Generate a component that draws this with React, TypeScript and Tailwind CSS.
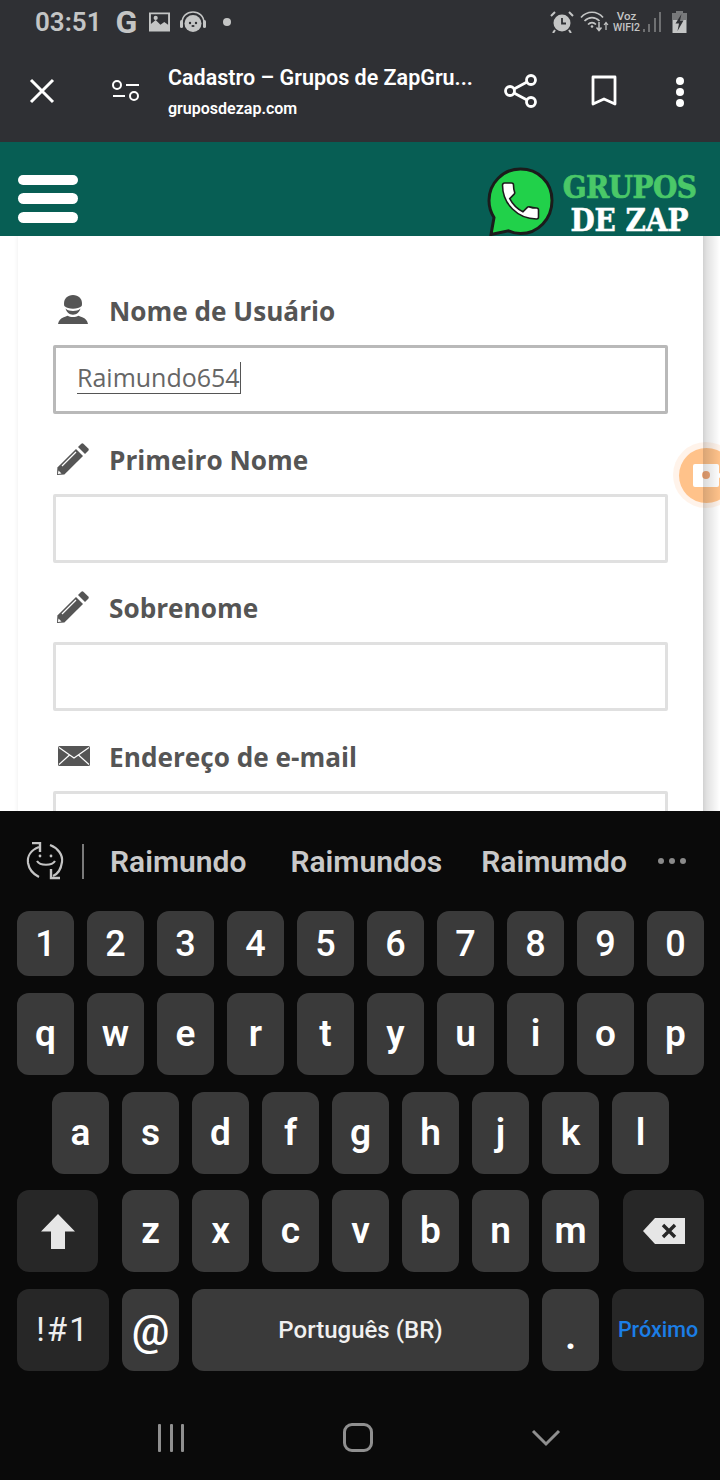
import React from "react";

const roboto = "font-['Roboto','Liberation_Sans',sans-serif]";
const openSans = "font-['Open_Sans','Liberation_Sans',sans-serif]";

function Key({ label, className = "w-[57px] h-[82px] bg-[#3a3a3a]", text = "text-[37px] font-semibold text-white" }: { label?: React.ReactNode; className?: string; text?: string }) {
  return (
    <div className={`flex items-center justify-center rounded-[12px] ${className} ${text}`}>
      {label}
    </div>
  );
}

function KeyRow({ keys }: { keys: string[] }) {
  return (
    <>
      {keys.map((k) => (
        <Key key={k} label={k} />
      ))}
    </>
  );
}

function UserIcon() {
  return (
    <svg width="30" height="30" viewBox="0 0 30 30" fill="#555555" className="ml-[1px]">
      <path d="M15 0c-5.500 0-9 3.600-9 8.500 0 .9.100 1.700.3 2.500 2 1.900 5.200 2.700 8.700 2.700s6.700-.8 8.700-2.700c.2-.8.3-1.600.3-2.500C24 3.600 20.500 0 15 0z" />
      <path d="M7.500 13.500c2 1.800 4.700 2.500 7.500 2.500s5.500-.7 7.500-2.500c-1 3.700-3.800 6.200-7.500 6.200s-6.500-2.500-7.500-6.200z" />
      <path d="M0 29c.8-3.800 2.600-5.700 5.700-6.800 1.500-.5 2.800-.9 3.800-1.500 1.500.9 3.300 1.300 5.500 1.300s4-.4 5.500-1.300c1 .6 2.300 1 3.800 1.500 3.100 1.100 4.900 3 5.700 6.800H0z" />
    </svg>
  );
}

function PencilIcon() {
  return (
    <svg width="34" height="34" viewBox="0 0 34 34" fill="#555555" className="-ml-[1px]">
      <path d="M1 33l.4-7.400L20 7l7 7L8.400 32.600 1 33z" />
      <path d="M22 5l3.300-3.300a1.500 1.500 0 0 1 2.100 0l4.900 4.900a1.500 1.500 0 0 1 0 2.100L29 12l-7-7z" />
      <path d="M6 24L20 10" stroke="#ffffff" strokeWidth="1.300" />
      <path d="M2.500 28.500l3 3-3.600.6z" fill="#ffffff" />
    </svg>
  );
}

function MailIcon() {
  return (
    <svg width="32" height="20" viewBox="0 0 32 20" className="ml-[1px] mt-[1px]">
      <rect x="0" y="0" width="32" height="20" rx="1.500" fill="#555555" />
      <path d="M1 1.500l15 10.500 15-10.500M1 18.500l10.500-9.500M31 18.500L20.500 9" fill="none" stroke="#ffffff" strokeWidth="1.200" />
    </svg>
  );
}

function Field({ icon, label, value, active }: { icon: React.ReactNode; label: string; value?: string; active?: boolean }) {
  return (
    <div className="mb-[24.670px]">
      <div className="flex items-center h-[40px] mb-[15px]">
        <div className="w-[56px] pl-[4px] flex items-center">{icon}</div>
        <span className={`${openSans} text-[26.200px] font-bold text-[#555555] leading-none mt-[2px]`}>{label}</span>
      </div>
      <div className={`h-[69px] rounded-[2px] border-[3px] bg-white flex items-center pl-[21px] ${active ? "border-[#b9b9b9]" : "border-[#e0e0e0]"}`}>
        {value && (
          <span className={`${openSans} text-[25px] text-[#666666] leading-[31px] border-b border-r border-[#555555] h-[32px] -translate-y-[2px]`}>{value}</span>
        )}
      </div>
    </div>
  );
}

function Logo() {
  return (
    <div className="flex items-start mr-[23px]">
      <svg width="68" height="69" viewBox="0 0 68 69" className="mt-[25px] shrink-0">
        <path d="M34.500 2C17 2 3 16 3 33.500c0 6.200 1.800 12 5 17L5 67.500l17.500-3.700c3.800 1.700 7.800 2.700 12 2.700 17.500 0 31.500-14.500 31.500-33S52 2 34.500 2z" fill="#21d14a" stroke="#1b1b1b" strokeWidth="3" />
        <g transform="translate(10.500 10) scale(2)">
          <path d="M6.620 10.790c1.440 2.830 3.760 5.140 6.590 6.590l2.200-2.200c.27-.27.67-.36 1.020-.24 1.120.37 2.330.57 3.570.57.55 0 1 .45 1 1V20c0 .55-.45 1-1 1-9.390 0-17-7.610-17-17 0-.55.45-1 1-1h3.500c.55 0 1 .45 1 1 0 1.250.2 2.450.57 3.570.11.35.03.74-.25 1.020l-2.200 2.200z" fill="#ffffff" stroke="#1b1b1b" strokeWidth="0.800" />
        </g>
      </svg>
      <div className="flex flex-col items-center ml-[8px] mt-[27px] font-bold font-['DejaVu_Serif_Condensed','DejaVu_Serif',serif] w-[135px] shrink-0">
        <span className="text-[31px] leading-[36px] text-[#4ac868] tracking-[-0.5px] whitespace-nowrap [-webkit-text-stroke:0.7px_#4ac868]">GRUPOS</span>
        <span className="text-[31px] leading-[31px] text-white whitespace-nowrap [-webkit-text-stroke:0.5px_#ffffff]">DE ZAP</span>
      </div>
    </div>
  );
}

function StatusBar() {
  return (
    <div className={`${roboto} h-[44px] flex items-center justify-between pl-[35px] pr-[33px] text-[#c4c5c5]`}>
      <div className="flex items-center">
        <span className="text-[26px] font-semibold leading-none">03:51</span>
        <span className="text-[32px] font-bold leading-none ml-[14px]">G</span>
        <svg width="21" height="20" viewBox="0 0 22 20" className="ml-[12px]" fill="#c4c5c5">
          <path fillRule="evenodd" d="M0 0h22v20H0zM2 2v10l5-4 5 5 4-3 4 3V2zM7 3.500a2.200 2.200 0 1 1 0 4.400 2.200 2.200 0 0 1 0-4.400z" />
        </svg>
        <svg width="26" height="22" viewBox="0 0 26 22" className="ml-[10px]">
          <path d="M2 12C2 5 7 1 13 1s11 4 11 11" fill="none" stroke="#c4c5c5" strokeWidth="1.500" />
          <rect x="0" y="9" width="3" height="8" rx="1.500" fill="#c4c5c5" />
          <rect x="23" y="9" width="3" height="8" rx="1.500" fill="#c4c5c5" />
          <circle cx="13" cy="12.500" r="8.500" fill="#c4c5c5" />
          <circle cx="10" cy="12" r="1.200" fill="#2f3034" />
          <circle cx="16" cy="12" r="1.200" fill="#2f3034" />
          <ellipse cx="13" cy="15" rx="1.600" ry="1" fill="#2f3034" />
        </svg>
        <span className="w-[8px] h-[8px] rounded-full bg-[#c4c5c5] ml-[17px]" />
      </div>
      <div className="flex items-center">
        <svg width="24" height="22" viewBox="0 0 24 22" fill="#c4c5c5">
          <circle cx="12" cy="12" r="8.500" />
          <path d="M12 7v5.500h4" fill="none" stroke="#2f3034" strokeWidth="1.800" />
          <path d="M1 5l4-4M23 5l-4-4M5 19l-2 3M19 19l2 3" stroke="#c4c5c5" strokeWidth="2" />
        </svg>
        <svg width="30" height="22" viewBox="0 0 30 22" className="ml-[6px]" fill="none" stroke="#c4c5c5" strokeWidth="1.700">
          <path d="M1 6.500C7-.5 17-.5 23 6.500M4.500 10c4.500-4.500 10.500-4.500 15 0M8 13.500c2.500-2.500 5.500-2.500 8 0" />
          <circle cx="12" cy="15.500" r="1.300" fill="#c4c5c5" stroke="none" />
          <path d="M19 11v8M16.500 16.500l2.500 3 2.500-3" strokeWidth="1.500" />
          <path d="M26 19v-7M24 14l2-2.500 2 2.500" strokeWidth="1.200" />
        </svg>
        <div className="flex flex-col items-center ml-[3px] w-[27px] font-medium leading-[11px]">
          <span className="text-[11.500px]">Voz</span>
          <span className="text-[10.500px] whitespace-nowrap">WIFI2</span>
        </div>
        <svg width="19" height="21" viewBox="0 0 19 21" className="ml-[3px]" fill="#6f7072">
          <rect x="0" y="17" width="2" height="3" />
          <rect x="5" y="12" width="2" height="8" />
          <rect x="11" y="6" width="2" height="14" />
          <rect x="16" y="0" width="2" height="20" />
        </svg>
        <svg width="15" height="22" viewBox="0 0 15 22" className="ml-[10px]">
          <path d="M4.500 0h6v2H14.500v20H.5V2H4.500z" fill="#c4c5c5" />
          <path d="M.5 2h14v7H.5zM4.500 0h6v2h-6z" fill="#77787a" />
          <path d="M9.500 3L3.500 12.500H7L5.500 20 11.500 9.500H8z" fill="#2f3034" />
        </svg>
      </div>
    </div>
  );
}

function Toolbar() {
  return (
    <div className={`${roboto} h-[98px] flex items-start text-white`}>
      <svg width="26" height="26" viewBox="0 0 26 26" className="ml-[29px] mt-[34px] shrink-0" stroke="#ffffff" strokeWidth="3">
        <path d="M2 2l22 22M24 2L2 24" />
      </svg>
      <svg width="28" height="22" viewBox="0 0 28 22" className="ml-[57px] mt-[36px] shrink-0" fill="none" stroke="#ffffff" strokeWidth="2">
        <circle cx="5" cy="5" r="4" />
        <path d="M14 5h13M1 16h12" />
        <circle cx="22" cy="16" r="4" />
      </svg>
      <div className="ml-[28px] w-[306px] mt-[20px]">
        <div className="text-[21.500px] font-semibold leading-[27px] whitespace-nowrap">Cadastro – Grupos de ZapGru...</div>
        <div className="text-[16px] font-semibold leading-[35px]">gruposdezap.com</div>
      </div>
      <svg width="34" height="36" viewBox="0 0 34 36" className="ml-[30px] mt-[29px] shrink-0" fill="none" stroke="#ffffff" strokeWidth="2.800">
        <circle cx="27" cy="7" r="4.500" />
        <circle cx="6" cy="18" r="4.500" />
        <circle cx="27" cy="29" r="4.500" />
        <path d="M10 16l13-7M10 20l13 7" />
      </svg>
      <svg width="26" height="32" viewBox="0 0 26 32" className="ml-[53px] mt-[31px] shrink-0" fill="none" stroke="#ffffff" strokeWidth="2.800">
        <path d="M2 2h22v27l-11-5-11 5z" strokeLinejoin="round" />
      </svg>
      <div className="ml-[59px] mt-[33px] flex flex-col gap-[3px] shrink-0">
        <span className="w-[8px] h-[8px] rounded-full bg-white" />
        <span className="w-[8px] h-[8px] rounded-full bg-white" />
        <span className="w-[8px] h-[8px] rounded-full bg-white" />
      </div>
    </div>
  );
}

function Keyboard() {
  const fn = "bg-[#272727]";
  return (
    <div className={`${roboto} bg-[#0a0a0a] flex-1 flex flex-col`}>
      <div className="h-[100px] flex items-center text-[30px] font-semibold text-[#c9c9c9] relative">
        <svg width="38" height="38" viewBox="0 0 38 38" className="ml-[26px] shrink-0" fill="none" stroke="#c4c4c4" strokeWidth="2.200">
          <path d="M13 5C5 8 1 14 2 21c1 6 5 11 11 14" />
          <path d="M24 3c8 3 13 10 12 17-1 7-4 12-9 14" />
          <path d="M6 1h8v9M25 27v9h9" strokeWidth="2.400" />
          <circle cx="14" cy="14" r="1.400" fill="#c4c4c4" stroke="none" />
          <circle cx="25" cy="14" r="1.400" fill="#c4c4c4" stroke="none" />
          <path d="M11 19c3 5 15 5 18 0" />
        </svg>
        <span className="w-[2px] h-[35px] bg-[#7a7a7a] ml-[18px]" />
        <span className="ml-[26px]">Raimundo</span>
        <span className="ml-[44px]">Raimundos</span>
        <span className="ml-[39px]">Raimumdo</span>
        <div className="ml-[31px] flex gap-[5px]">
          <span className="w-[6px] h-[6px] rounded-full bg-[#8a8a8a]" />
          <span className="w-[6px] h-[6px] rounded-full bg-[#8a8a8a]" />
          <span className="w-[6px] h-[6px] rounded-full bg-[#8a8a8a]" />
        </div>
      </div>
      <div className="flex gap-[13px] pl-[17px]">
        {["1", "2", "3", "4", "5", "6", "7", "8", "9", "0"].map((k) => (
          <Key key={k} label={k} className="w-[57px] h-[65px] bg-[#3a3a3a]" text="text-[36px] font-medium text-white" />
        ))}
      </div>
      <div className="flex gap-[13px] pl-[17px] mt-[17px]">
        <KeyRow keys={["q", "w", "e", "r", "t", "y", "u", "i", "o", "p"]} />
      </div>
      <div className="flex gap-[13px] pl-[52px] mt-[17px]">
        <KeyRow keys={["a", "s", "d", "f", "g", "h", "j", "k", "l"]} />
      </div>
      <div className="flex gap-[13px] pl-[17px] mt-[16px]">
        <Key
          className={`w-[81px] h-[82px] mr-[11px] ${fn}`}
          label={
            <svg width="36" height="36" viewBox="0 0 36 36" fill="#e6e6e6">
              <path d="M18 1L35 18.500H25V36H11V18.500H1z" />
            </svg>
          }
        />
        <KeyRow keys={["z", "x", "c", "v", "b", "n", "m"]} />
        <Key
          className={`w-[81px] h-[82px] ml-[11px] ${fn}`}
          label={
            <svg width="42" height="26" viewBox="0 0 42 26">
              <path d="M12 0h30v26H12L0 13z" fill="#e6e6e6" />
              <path d="M20 7l12 12M32 7L20 19" stroke="#272727" strokeWidth="3.400" />
            </svg>
          }
        />
      </div>
      <div className="flex gap-[13px] pl-[17px] mt-[17px]">
        <Key className={`w-[92px] h-[82px] ${fn}`} label="!#1" text="text-[33px] font-normal text-[#eeeeee] tracking-[2px]" />
        <Key label="@" text="text-[42px] font-medium text-white" />
        <Key className="w-[337px] h-[82px] bg-[#3a3a3a]" label="Português (BR)" text="text-[24px] font-medium text-[#f0f0f0]" />
        <Key label={<span className="mt-[14px]">.</span>} text="text-[37px] font-bold text-white" />
        <Key className={`w-[92px] h-[82px] ${fn}`} label="Próximo" text="text-[21.500px] font-medium text-[#1b7ee6]" />
      </div>
      <div className="flex-1 relative flex items-center">
        <div className="ml-[158px] flex gap-[8.500px] mt-[24px]">
          <span className="w-[3px] h-[28px] rounded-[1px] bg-[#8f8f8f]" />
          <span className="w-[3px] h-[28px] rounded-[1px] bg-[#8f8f8f]" />
          <span className="w-[3px] h-[28px] rounded-[1px] bg-[#8f8f8f]" />
        </div>
        <span className="ml-[159px] mt-[24px] w-[30px] h-[29px] rounded-[9px] border-[3px] border-[#8f8f8f]" />
        <svg width="30" height="18" viewBox="0 0 30 18" className="ml-[158px] mt-[24px]" fill="none" stroke="#8f8f8f" strokeWidth="3">
          <path d="M2 2l13 13L28 2" />
        </svg>
      </div>
    </div>
  );
}

export default function App() {
  return (
    <div className="w-[720px] h-[1480px] flex flex-col overflow-hidden bg-white">
      <div className="bg-[#2f3034]">
        <StatusBar />
        <Toolbar />
      </div>
      <div className="h-[94px] bg-[#075e54] flex items-start justify-between">
        <div className="ml-[18px] mt-[33px] flex flex-col gap-[8px]">
          <span className="block w-[60px] h-[10px] rounded-full bg-white" />
          <span className="block w-[60px] h-[11px] rounded-full bg-white" />
          <span className="block w-[60px] h-[11px] rounded-full bg-white" />
        </div>
        <Logo />
      </div>
      <div className="h-[575px] relative overflow-hidden bg-white">
        <div className="ml-[18px] w-[685px] h-[640px] px-[35px] pt-[54px] bg-white shadow-[0_0_5px_rgba(0,0,0,0.08)]">
          <Field icon={<UserIcon />} label="Nome de Usuário" value="Raimundo654" active />
          <Field icon={<PencilIcon />} label="Primeiro Nome" />
          <Field icon={<PencilIcon />} label="Sobrenome" />
          <Field icon={<MailIcon />} label="Endereço de e-mail" />
        </div>
        {/* floating record button */}
        <div className="absolute left-[673px] top-[206px] w-[66px] h-[66px] rounded-full bg-[#ffb070]/15 flex items-center justify-center">
          <div className="w-[55px] h-[55px] rounded-full bg-[#ffbd7f]/90 relative">
            <div className="absolute left-[14px] top-[16px] w-[26px] h-[23px] rounded-[2px] bg-white flex items-center justify-center">
              <span className="w-[8px] h-[8px] rounded-full bg-[#f0a878]" />
            </div>
            <svg width="10" height="23" viewBox="0 0 10 23" className="absolute left-[38px] top-[16px]" fill="#ffffff">
              <path d="M0 11.500L10 2v19z" />
            </svg>
          </div>
        </div>
        {/* scrollbar-side shadow over the page edge */}
        <div className="absolute left-[703px] top-0 w-[17px] h-full bg-linear-to-r from-black/15 to-transparent" />
      </div>
      <Keyboard />
    </div>
  );
}
